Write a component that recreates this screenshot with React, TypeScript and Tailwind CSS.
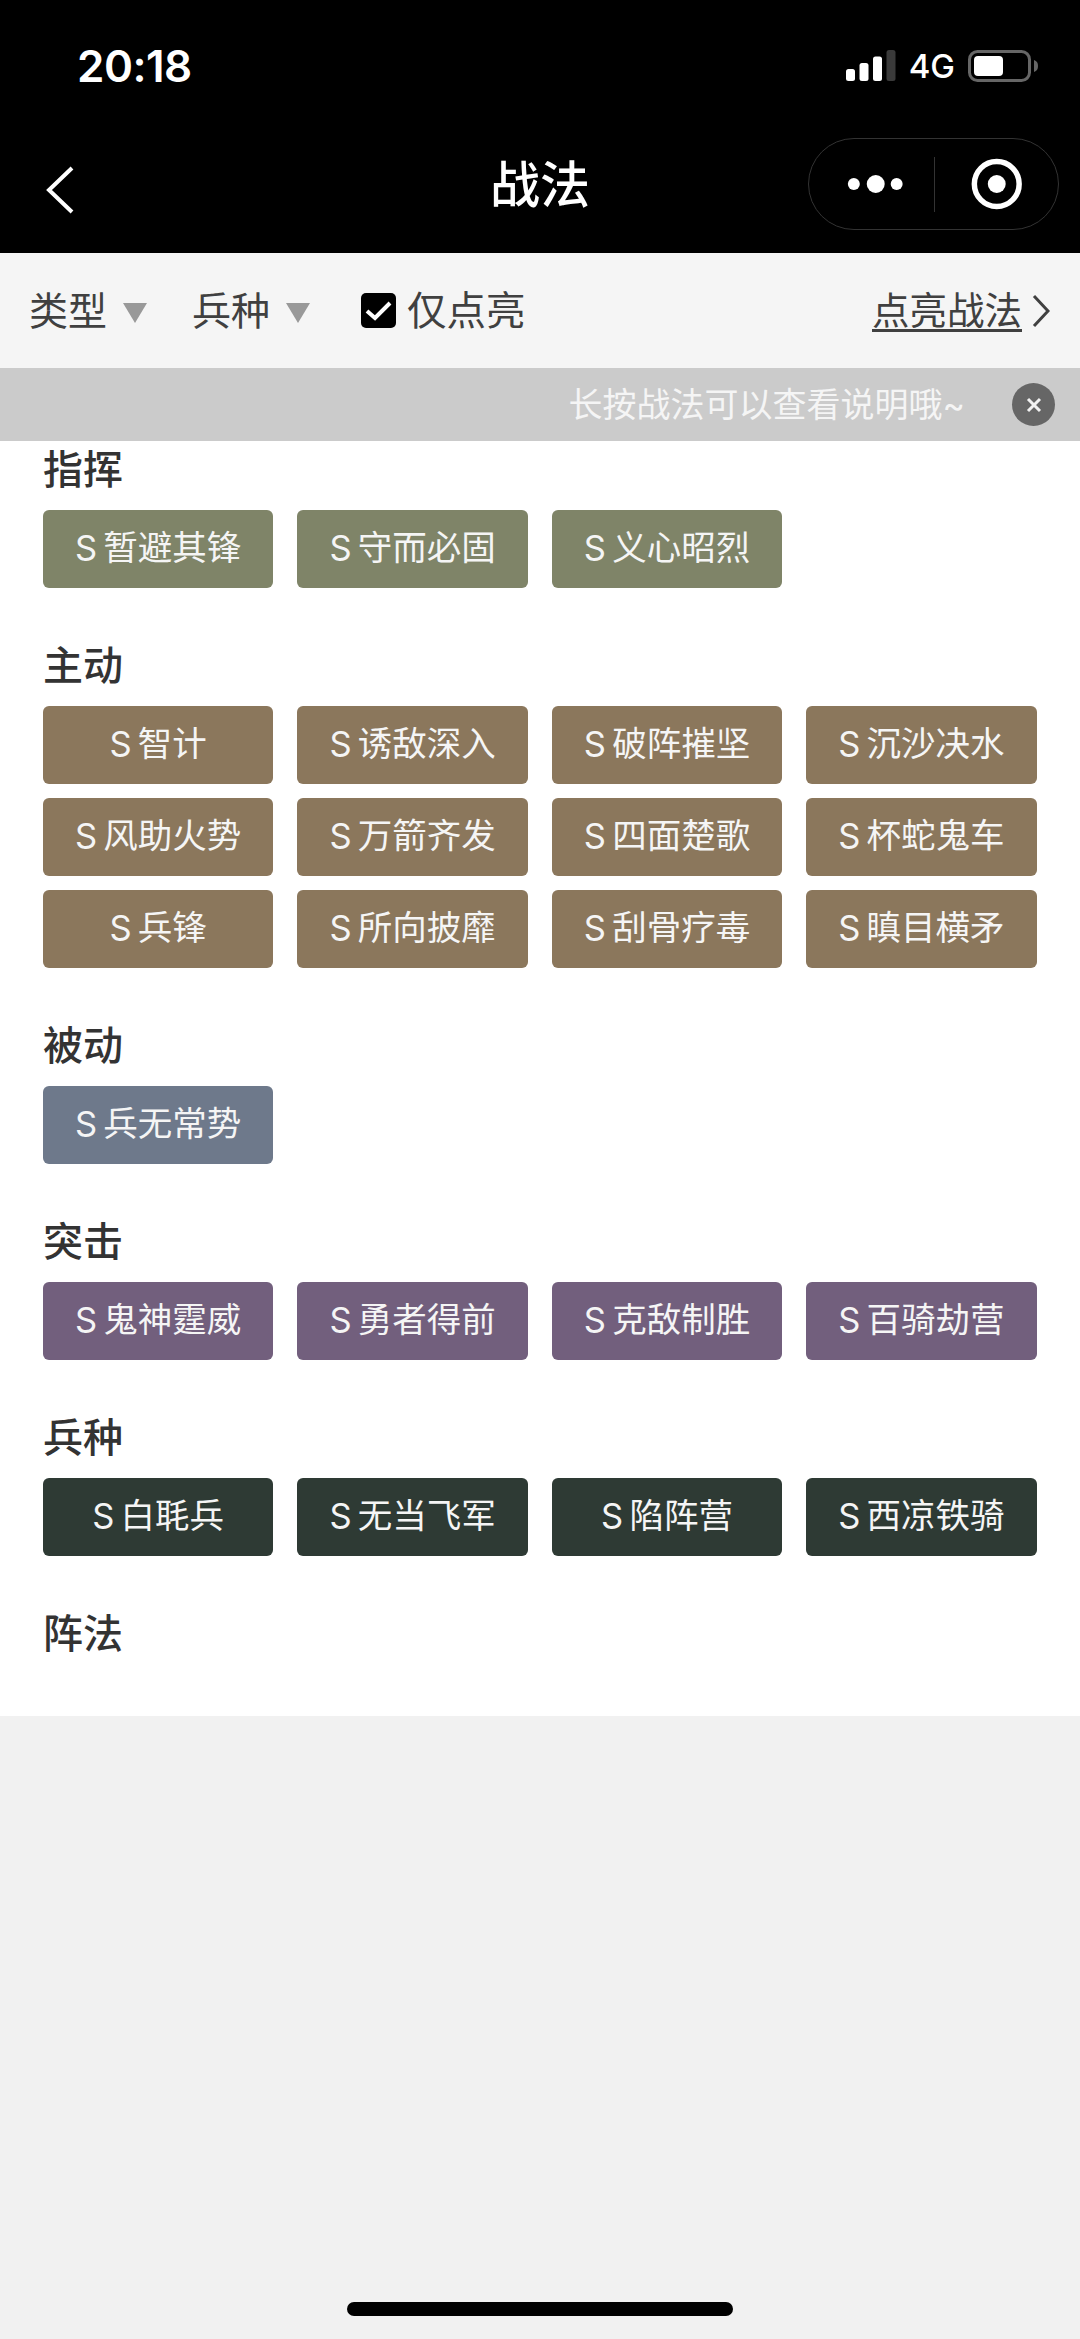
import React from 'react';

const font = { fontFamily: '"Inter", "Noto Sans CJK SC", sans-serif' };

type Group = { title: string; color: string; items: string[] };

const groups: Group[] = [
  { title: '指挥', color: 'bg-[#7f8468]', items: ['暂避其锋', '守而必固', '义心昭烈'] },
  {
    title: '主动',
    color: 'bg-[#8b775c]',
    items: ['智计', '诱敌深入', '破阵摧坚', '沉沙决水', '风助火势', '万箭齐发', '四面楚歌', '杯蛇鬼车', '兵锋', '所向披靡', '刮骨疗毒', '瞋目横矛'],
  },
  { title: '被动', color: 'bg-[#6e798b]', items: ['兵无常势'] },
  { title: '突击', color: 'bg-[#725f7d]', items: ['鬼神霆威', '勇者得前', '克敌制胜', '百骑劫营'] },
  { title: '兵种', color: 'bg-[#2e3a34]', items: ['白毦兵', '无当飞军', '陷阵营', '西凉铁骑'] },
  { title: '阵法', color: '', items: [] },
];

const Triangle = () => (
  <svg width="24" height="20" viewBox="0 0 24 20" className="ml-[16px] mt-[4px]">
    <path d="M0 0H24L12 20Z" fill="#999999" />
  </svg>
);

const StatusIcons = () => (
  <div className="flex items-center">
    <svg width="50" height="32" viewBox="0 0 50 32">
      <rect x="0" y="19" width="9" height="12" rx="2.5" fill="#fff" />
      <rect x="13.5" y="13" width="9" height="18" rx="2.5" fill="#fff" />
      <rect x="27" y="6.5" width="9" height="24.5" rx="2.5" fill="#fff" />
      <rect x="40.5" y="0" width="9" height="31" rx="2.5" fill="#3a3a3a" />
    </svg>
    <span className="ml-[13px] text-[33px] leading-[32px] font-medium text-white">4G</span>
    <svg width="71" height="32" viewBox="0 0 71 32" className="ml-[13px]">
      <rect x="1.5" y="1.5" width="60" height="29" rx="8" fill="none" stroke="#666666" strokeWidth="3" />
      <rect x="6" y="6" width="29" height="20" rx="4" fill="#fff" />
      <path d="M66 10C69 11 70 13 70 16C70 19 69 21 66 22Z" fill="#666666" />
    </svg>
  </div>
);

const Capsule = () => (
  <div className="flex h-[92px] w-[251px] items-center rounded-full border border-[#333333]">
    <svg width="125" height="54" viewBox="0 0 125 54">
      <circle cx="45" cy="27" r="6" fill="#fff" />
      <circle cx="67" cy="27" r="9" fill="#fff" />
      <circle cx="88" cy="27" r="6" fill="#fff" />
    </svg>
    <div className="h-[55px] w-px bg-[#333333]" />
    <svg width="124" height="54" viewBox="0 0 124 54">
      <circle cx="62" cy="27" r="22.5" fill="none" stroke="#fff" strokeWidth="5.5" />
      <circle cx="62" cy="27" r="9" fill="#fff" />
    </svg>
  </div>
);

export default function App() {
  return (
    <div className="flex min-h-[2339px] w-[1080px] flex-col bg-[#f1f1f1]" style={font}>
      <header className="h-[253px] bg-black">
        <div className="flex items-center justify-between pl-[77px] pr-[41px] pt-[50px]">
          <span className="text-[44px] leading-[32px] font-semibold tracking-[-0.5px] text-white">20:18</span>
          <StatusIcons />
        </div>
        <div className="relative mt-[56px] flex items-center justify-between pl-[46px] pr-[21px]">
          <svg width="28" height="48" viewBox="0 0 28 48" className="mt-[12px]">
            <path d="M26 2L3 24L26 46" fill="none" stroke="#fff" strokeWidth="4" />
          </svg>
          <span className="absolute left-0 right-0 top-[19px] text-center text-[50px] leading-[56px] font-medium text-white">战法</span>
          <Capsule />
        </div>
      </header>

      <div className="flex h-[115px] items-center bg-[#f5f5f5] pl-[29px] pr-[30px] text-[39px] leading-[46px] text-[#404040]">
        <span>类型</span>
        <Triangle />
        <span className="ml-[45px]">兵种</span>
        <Triangle />
        <svg width="35" height="35" viewBox="0 0 35 35" className="ml-[51px]">
          <rect width="35" height="35" rx="5" fill="#000" />
          <path d="M6 18L14 25L29 10" fill="none" stroke="#fff" strokeWidth="4" />
        </svg>
        <span className="ml-[11px] text-[39.5px]">仅点亮</span>
        <span className="ml-auto text-[37.5px] underline underline-offset-[5px]">点亮战法</span>
        <svg width="18" height="34" viewBox="0 0 18 34" className="ml-[10px]">
          <path d="M2 2L16 17L2 32" fill="none" stroke="#404040" strokeWidth="3" />
        </svg>
      </div>

      <div className="flex h-[73px] items-center justify-end bg-[#cbcbcb] pr-[25px]">
        <span className="text-[34px] leading-[44px] text-[#f5f5f5]">长按战法可以查看说明哦~</span>
        <div className="ml-[47px] flex h-[43px] w-[43px] items-center justify-center rounded-full bg-[#666666]">
          <svg width="16" height="16" viewBox="0 0 16 16">
            <path d="M2 2L14 14M14 2L2 14" stroke="#f2f2f2" strokeWidth="3" />
          </svg>
        </div>
      </div>

      <main className="bg-white pb-[7px]">
        {groups.map(group => (
          <section key={group.title} className="px-[43px] pb-[35px]">
            <h2 className="mb-[11px] h-[58px] text-[40px] leading-[58px] font-medium text-[#333333]">{group.title}</h2>
            {group.items.length > 0 && (
              <div className="grid grid-cols-[repeat(4,230.4px)] gap-x-[24px]">
                {group.items.map(name => (
                  <div
                    key={name}
                    className={`mb-[14.4px] flex h-[77.6px] items-center justify-center rounded-[6px] pb-[2px] text-[34.5px] [word-spacing:-3.5px] text-[#f5f5f5] ${group.color}`}
                  >
                    S {name}
                  </div>
                ))}
              </div>
            )}
          </section>
        ))}
      </main>

      <div className="flex flex-1 items-end justify-center pb-[23px]">
        <div className="h-[14px] w-[386px] rounded-full bg-black" />
      </div>
    </div>
  );
}
